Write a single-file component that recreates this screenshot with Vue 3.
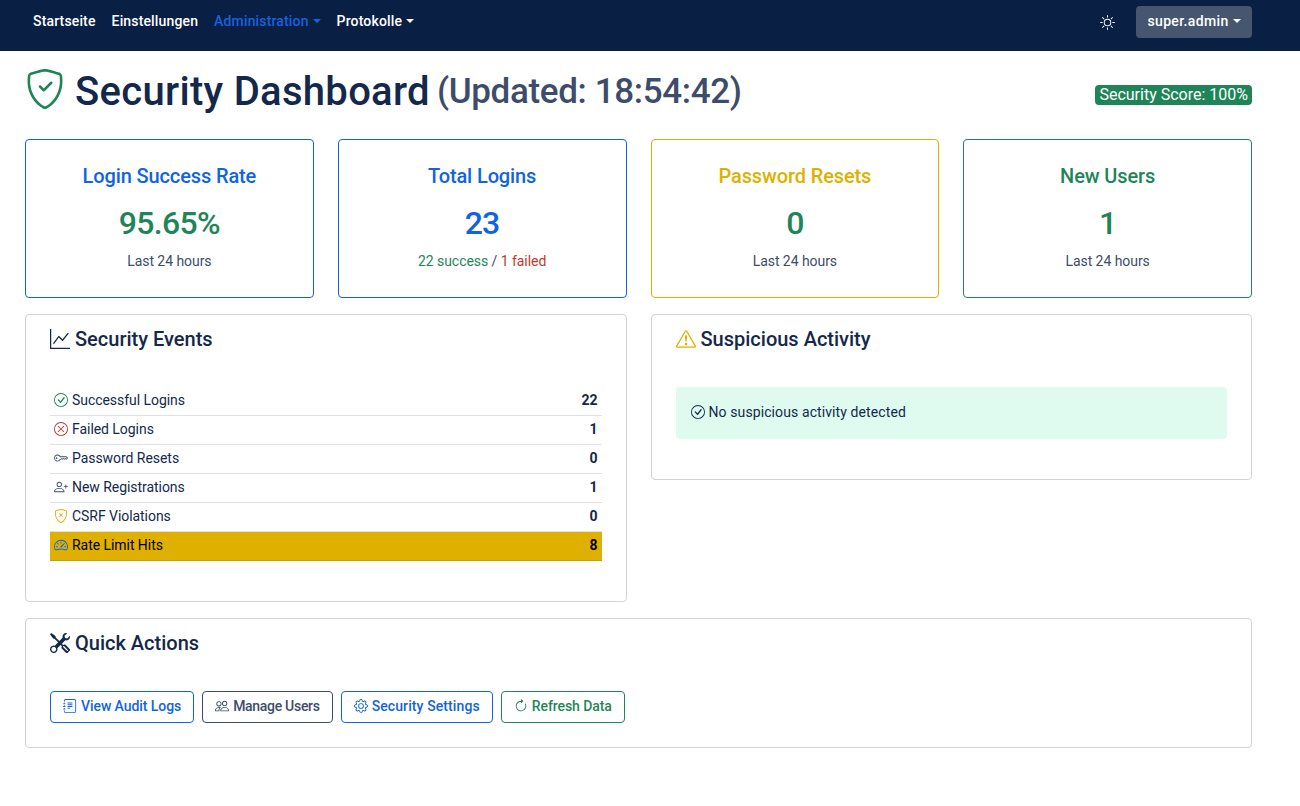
<script setup>
const shield = 'M5.338 1.59a61 61 0 0 0-2.837.856.48.48 0 0 0-.328.39c-.554 4.157.726 7.19 2.253 9.188a10.7 10.7 0 0 0 2.287 2.233c.346.244.652.42.893.533q.18.085.293.118a1 1 0 0 0 .101.025 1 1 0 0 0 .1-.025q.114-.034.294-.118c.24-.113.547-.29.893-.533a10.7 10.7 0 0 0 2.287-2.233c1.527-1.997 2.807-5.031 2.253-9.188a.48.48 0 0 0-.328-.39c-.651-.213-1.75-.56-2.837-.855C9.552 1.29 8.531 1.067 8 1.067c-.53 0-1.552.223-2.662.524zM5.072.56C6.157.265 7.31 0 8 0s1.843.265 2.928.56c1.11.3 2.229.655 2.887.87a1.54 1.54 0 0 1 1.044 1.262c.596 4.477-.787 7.795-2.465 9.99a11.8 11.8 0 0 1-2.517 2.453 7 7 0 0 1-1.048.625c-.28.132-.581.24-.829.24s-.548-.108-.829-.24a7 7 0 0 1-1.048-.625 11.8 11.8 0 0 1-2.517-2.453C1.928 10.487.545 7.169 1.141 2.692A1.54 1.54 0 0 1 2.185 1.43 63 63 0 0 1 5.072.56'
const circle = 'M8 15A7 7 0 1 1 8 1a7 7 0 0 1 0 14m0 1A8 8 0 1 0 8 0a8 8 0 0 0 0 16'

const icons = {
  shieldCheck: shield + 'M10.854 5.146a.5.5 0 0 1 0 .708l-3 3a.5.5 0 0 1-.708 0l-1.5-1.5a.5.5 0 1 1 .708-.708L7.5 7.793l2.646-2.647a.5.5 0 0 1 .708 0',
  shieldX: shield + 'M6.146 5.146a.5.5 0 0 1 .708 0L8 6.293l1.146-1.147a.5.5 0 1 1 .708.708L8.707 7l1.147 1.146a.5.5 0 0 1-.708.708L8 7.707 6.854 8.854a.5.5 0 1 1-.708-.708L7.293 7 6.146 5.854a.5.5 0 0 1 0-.708',
  graph: 'M0 0h1v15h15v1H0zm14.817 3.113a.5.5 0 0 1 .07.704l-4.5 5.5a.5.5 0 0 1-.74.037L7.06 6.767l-3.656 5.027a.5.5 0 0 1-.808-.588l4-5.5a.5.5 0 0 1 .758-.06l2.609 2.61 4.15-5.073a.5.5 0 0 1 .704-.07',
  check: circle + 'M10.97 4.97l-.02.022-3.473 4.425-2.093-2.094a.75.75 0 0 0-1.06 1.06L6.97 11.03a.75.75 0 0 0 1.079-.02l3.992-4.99a.75.75 0 0 0-1.071-1.05',
  cross: circle + 'M4.646 4.646a.5.5 0 0 1 .708 0L8 7.293l2.646-2.647a.5.5 0 0 1 .708.708L8.707 8l2.647 2.646a.5.5 0 0 1-.708.708L8 8.707l-2.646 2.647a.5.5 0 0 1-.708-.708L7.293 8 4.646 5.354a.5.5 0 0 1 0-.708',
  key: 'M0 8a4 4 0 0 1 7.465-2H14a.5.5 0 0 1 .354.146l1.5 1.5a.5.5 0 0 1 0 .708l-1.5 1.5a.5.5 0 0 1-.708 0L13 9.207l-.646.647a.5.5 0 0 1-.708 0L11 9.207l-.646.647a.5.5 0 0 1-.708 0L9 9.207l-.646.647A.5.5 0 0 1 8 10h-.535A4 4 0 0 1 0 8m4-3a3 3 0 1 0 2.712 4.285A.5.5 0 0 1 7.163 9h.63l.853-.854a.5.5 0 0 1 .708 0l.646.647.646-.647a.5.5 0 0 1 .708 0l.646.647.646-.647a.5.5 0 0 1 .708 0l.646.647.793-.793-1-1h-6.63a.5.5 0 0 1-.451-.285A3 3 0 0 0 4 5M4 8a1 1 0 1 1-2 0 1 1 0 0 1 2 0',
  personPlus: 'M6 8a3 3 0 1 0 0-6 3 3 0 0 0 0 6m2-3a2 2 0 1 1-4 0 2 2 0 0 1 4 0m4 8c0 1-1 1-1 1H1s-1 0-1-1 1-4 6-4 6 3 6 4m-1-.004c-.001-.246-.154-.986-.832-1.664C9.516 10.68 8.289 10 6 10s-3.516.68-4.168 1.332c-.678.678-.83 1.418-.832 1.664zM13.5 5a.5.5 0 0 1 .5.5V7h1.5a.5.5 0 0 1 0 1H14v1.5a.5.5 0 0 1-1 0V8h-1.5a.5.5 0 0 1 0-1H13V5.5a.5.5 0 0 1 .5-.5',
  speed: 'M8 4a.5.5 0 0 1 .5.5V6a.5.5 0 0 1-1 0V4.5A.5.5 0 0 1 8 4M3.732 5.732a.5.5 0 0 1 .707 0l.915.914a.5.5 0 1 1-.708.708l-.914-.915a.5.5 0 0 1 0-.707M2 10a.5.5 0 0 1 .5-.5h1.586a.5.5 0 0 1 0 1H2.5A.5.5 0 0 1 2 10m9.5 0a.5.5 0 0 1 .5-.5h1.5a.5.5 0 0 1 0 1H12a.5.5 0 0 1-.5-.5m.754-4.246a.39.39 0 0 0-.527-.02L7.547 9.31a.91.91 0 1 0 1.302 1.258l3.434-4.297a.39.39 0 0 0-.029-.518zM0 10a8 8 0 1 1 15.547 2.661c-.442 1.253-1.845 1.602-2.932 1.25C11.309 13.488 9.475 13 8 13c-1.474 0-3.31.488-4.615.911-1.087.352-2.49.003-2.932-1.25A8 8 0 0 1 0 10m8-7a7 7 0 0 0-6.603 9.329c.203.575.923.876 1.68.63C4.397 12.533 6.358 12 8 12s3.604.532 4.923.96c.757.245 1.477-.056 1.68-.631A7 7 0 0 0 8 3',
  warn: 'M7.938 2.016A.13.13 0 0 1 8.002 2a.13.13 0 0 1 .063.016.15.15 0 0 1 .054.057l6.857 11.667c.036.06.035.124.002.183a.2.2 0 0 1-.054.06.1.1 0 0 1-.066.017H1.146a.1.1 0 0 1-.066-.017.2.2 0 0 1-.054-.06.18.18 0 0 1 .002-.183L7.884 2.073a.15.15 0 0 1 .054-.057m1.044-.45a1.13 1.13 0 0 0-1.96 0L.165 13.233c-.457.778.091 1.767.98 1.767h13.713c.889 0 1.438-.99.98-1.767zM7.002 12a1 1 0 1 1 2 0 1 1 0 0 1-2 0M7.1 5.995a.905.905 0 1 1 1.8 0l-.35 3.507a.552.552 0 0 1-1.1 0z',
  tools: 'M1 0 0 1l2.2 3.081a1 1 0 0 0 .815.419h.07a1 1 0 0 1 .708.293l2.675 2.675-2.617 2.654A3.003 3.003 0 0 0 0 13a3 3 0 1 0 5.878-.851l2.654-2.617.968.968-.305.914a1 1 0 0 0 .242 1.023l3.27 3.27a.997.997 0 0 0 1.414 0l1.586-1.586a.997.997 0 0 0 0-1.414l-3.27-3.27a1 1 0 0 0-1.023-.242L10.5 9.5l-.96-.96 2.68-2.643A3.005 3.005 0 0 0 16 3q0-.405-.102-.777l-2.14 2.141L12 4l-.364-1.757L13.777.102a3 3 0 0 0-3.675 3.68L7.462 6.46 4.793 3.793a1 1 0 0 1-.293-.707v-.071a1 1 0 0 0-.419-.814zm9.646 10.646a.5.5 0 0 1 .708 0l2.914 2.915a.5.5 0 0 1-.707.707l-2.915-2.914a.5.5 0 0 1 0-.708M3 11l.471.242.529.026.287.445.445.287.026.529L5 13l-.242.471-.026.529-.445.287-.287.445-.529.026L3 15l-.471-.242L2 14.732l-.287-.445L1.268 14l-.026-.529L1 13l.242-.471.026-.529.445-.287.287-.445.529-.026z',
  journal: 'M5 10.5a.5.5 0 0 1 .5-.5h2a.5.5 0 0 1 0 1h-2a.5.5 0 0 1-.5-.5m0-2a.5.5 0 0 1 .5-.5h5a.5.5 0 0 1 0 1h-5a.5.5 0 0 1-.5-.5m0-2a.5.5 0 0 1 .5-.5h5a.5.5 0 0 1 0 1h-5a.5.5 0 0 1-.5-.5m0-2a.5.5 0 0 1 .5-.5h5a.5.5 0 0 1 0 1h-5a.5.5 0 0 1-.5-.5M3 0h10a2 2 0 0 1 2 2v12a2 2 0 0 1-2 2H3a2 2 0 0 1-2-2v-1h1v1a1 1 0 0 0 1 1h10a1 1 0 0 0 1-1V2a1 1 0 0 0-1-1H3a1 1 0 0 0-1 1v1H1V2a2 2 0 0 1 2-2M1 5v-.5a.5.5 0 0 1 1 0V5h.5a.5.5 0 0 1 0 1h-2a.5.5 0 0 1 0-1zm0 3v-.5a.5.5 0 0 1 1 0V8h.5a.5.5 0 0 1 0 1h-2a.5.5 0 0 1 0-1zm0 3v-.5a.5.5 0 0 1 1 0v.5h.5a.5.5 0 0 1 0 1h-2a.5.5 0 0 1 0-1z',
  people: 'M15 14s1 0 1-1-1-4-5-4-5 3-5 4 1 1 1 1zm-7.978-1L7 12.996c.001-.264.167-1.03.76-1.72C8.312 10.629 9.282 10 11 10c1.717 0 2.687.63 3.24 1.276.593.69.758 1.457.76 1.72l-.008.002-.014.002zM11 7a2 2 0 1 0 0-4 2 2 0 0 0 0 4m3-2a3 3 0 1 1-6 0 3 3 0 0 1 6 0M6.936 9.28a6 6 0 0 0-1.23-.247A7 7 0 0 0 5 9c-4 0-5 3-5 4q0 1 1 1h4.216A2.24 2.24 0 0 1 5 13c0-1.01.377-2.042 1.09-2.904.243-.294.526-.569.846-.816M4.92 10A5.5 5.5 0 0 0 4 13H1c0-.26.164-1.03.76-1.724.545-.636 1.492-1.256 3.16-1.275ZM1.5 5.5a3 3 0 1 1 6 0 3 3 0 0 1-6 0m3-2a2 2 0 1 0 0 4 2 2 0 0 0 0-4',
  gear: 'M8 4.754a3.246 3.246 0 1 0 0 6.492 3.246 3.246 0 0 0 0-6.492M5.754 8a2.246 2.246 0 1 1 4.492 0 2.246 2.246 0 0 1-4.492 0M9.796 1.343c-.527-1.79-3.065-1.79-3.592 0l-.094.319a.873.873 0 0 1-1.255.52l-.292-.16c-1.64-.892-3.433.902-2.54 2.541l.159.292a.873.873 0 0 1-.52 1.255l-.319.094c-1.79.527-1.79 3.065 0 3.592l.319.094a.873.873 0 0 1 .52 1.255l-.16.292c-.892 1.64.901 3.434 2.541 2.54l.292-.159a.873.873 0 0 1 1.255.52l.094.319c.527 1.79 3.065 1.79 3.592 0l.094-.319a.873.873 0 0 1 1.255-.52l.292.16c1.64.893 3.434-.902 2.54-2.541l-.159-.292a.873.873 0 0 1 .52-1.255l.319-.094c1.79-.527 1.79-3.065 0-3.592l-.319-.094a.873.873 0 0 1-.52-1.255l.16-.292c.893-1.64-.902-3.433-2.541-2.54l-.292.159a.873.873 0 0 1-1.255-.52zm-2.633.283c.246-.835 1.428-.835 1.674 0l.094.319a1.873 1.873 0 0 0 2.693 1.115l.291-.16c.764-.415 1.6.42 1.184 1.185l-.159.292a1.873 1.873 0 0 0 1.116 2.692l.318.094c.835.246.835 1.428 0 1.674l-.319.094a1.873 1.873 0 0 0-1.115 2.693l.16.291c.415.764-.42 1.6-1.185 1.184l-.291-.159a1.873 1.873 0 0 0-2.693 1.116l-.094.318c-.246.835-1.428.835-1.674 0l-.094-.319a1.873 1.873 0 0 0-2.692-1.115l-.292.16c-.764.415-1.6-.42-1.184-1.185l.159-.291A1.873 1.873 0 0 0 1.945 8.93l-.319-.094c-.835-.246-.835-1.428 0-1.674l.319-.094A1.873 1.873 0 0 0 3.06 4.377l-.16-.292c-.415-.764.42-1.6 1.185-1.184l.292.159a1.873 1.873 0 0 0 2.692-1.115z',
  refresh: 'M8 3a5 5 0 1 0 4.546 2.914.5.5 0 0 1 .908-.417A6 6 0 1 1 8 2zM8 4.466V.534a.25.25 0 0 1 .41-.192l2.36 1.966c.12.1.12.284 0 .384L8.41 4.658A.25.25 0 0 1 8 4.466',
  sun: 'M8 11a3 3 0 1 1 0-6 3 3 0 0 1 0 6m0 1a4 4 0 1 0 0-8 4 4 0 0 0 0 8M8 0a.5.5 0 0 1 .5.5v2a.5.5 0 0 1-1 0v-2A.5.5 0 0 1 8 0m0 13a.5.5 0 0 1 .5.5v2a.5.5 0 0 1-1 0v-2A.5.5 0 0 1 8 13m8-5a.5.5 0 0 1-.5.5h-2a.5.5 0 0 1 0-1h2a.5.5 0 0 1 .5.5M3 8a.5.5 0 0 1-.5.5h-2a.5.5 0 0 1 0-1h2A.5.5 0 0 1 3 8m10.657-5.657a.5.5 0 0 1 0 .707l-1.414 1.415a.5.5 0 1 1-.707-.708l1.414-1.414a.5.5 0 0 1 .707 0m-9.193 9.193a.5.5 0 0 1 0 .707L3.05 13.657a.5.5 0 0 1-.707-.707l1.414-1.414a.5.5 0 0 1 .707 0m9.193 2.121a.5.5 0 0 1-.707 0l-1.414-1.414a.5.5 0 0 1 .707-.707l1.414 1.414a.5.5 0 0 1 0 .707M4.464 4.465a.5.5 0 0 1-.707 0L2.343 3.05a.5.5 0 1 1 .707-.707l1.414 1.414a.5.5 0 0 1 0 .708'
}

const stats = [
  { title: 'Login Success Rate', value: '95.65%', tone: 'primary', valueTone: 'success', border: 'primary' },
  { title: 'Total Logins', value: '23', tone: 'primary', valueTone: 'primary', border: 'primary', split: true },
  { title: 'Password Resets', value: '0', tone: 'warning', valueTone: 'success', border: 'warning' },
  { title: 'New Users', value: '1', tone: 'success', valueTone: 'success', border: 'success' }
]

const events = [
  { label: 'Successful Logins', count: 22, icon: 'check', tone: 'success' },
  { label: 'Failed Logins', count: 1, icon: 'cross', tone: 'danger' },
  { label: 'Password Resets', count: 0, icon: 'key', tone: 'slate' },
  { label: 'New Registrations', count: 1, icon: 'personPlus', tone: 'slate' },
  { label: 'CSRF Violations', count: 0, icon: 'shieldX', tone: 'warning' },
  { label: 'Rate Limit Hits', count: 8, icon: 'speed', tone: 'primary', hot: true }
]

const actions = [
  { label: 'View Audit Logs', icon: 'journal', tone: 'primary' },
  { label: 'Manage Users', icon: 'people', tone: 'slate', spacing: 'tight' },
  { label: 'Security Settings', icon: 'gear', tone: 'primary', spacing: 'wide' },
  { label: 'Refresh Data', icon: 'refresh', tone: 'success' }
]
</script>

<template>
  <nav class="navbar">
    <ul class="nav-links">
      <li><a>Startseite</a></li>
      <li><a>Einstellungen</a></li>
      <li><a class="active caret">Administration</a></li>
      <li><a class="caret">Protokolle</a></li>
    </ul>
    <div class="nav-right">
      <svg class="sun" viewBox="0 0 16 16" fill="currentColor"><path :d="icons.sun" /></svg>
      <button class="user-btn caret">super.admin</button>
    </div>
  </nav>

  <main class="page">
    <header class="head">
      <h1>
        <svg class="head-icon success" viewBox="0 0 16 16" fill="currentColor"><path :d="icons.shieldCheck" /></svg>
        <span>Security Dashboard</span>
        <small>(Updated: 18:54:42)</small>
      </h1>
      <span class="score">Security Score: 100%</span>
    </header>

    <section class="stats">
      <div v-for="s in stats" :key="s.title" class="stat" :class="'b-' + s.border">
        <h5 :class="s.tone">{{ s.title }}</h5>
        <div class="stat-value" :class="s.valueTone">{{ s.value }}</div>
        <p v-if="s.split" class="stat-note"><span class="success">22 success</span> / <span class="danger">1 failed</span></p>
        <p v-else class="stat-note">Last 24 hours</p>
      </div>
    </section>

    <section class="panels">
      <div class="card">
        <h5 class="card-title"><svg class="title-icon" viewBox="0 0 16 16" fill="currentColor"><path :d="icons.graph" /></svg>Security Events</h5>
        <div class="event-list">
          <div v-for="e in events" :key="e.label" class="event" :class="{ hot: e.hot }">
            <span class="event-label">
              <svg class="row-icon" :class="e.tone" viewBox="0 0 16 16" fill="currentColor"><path :d="icons[e.icon]" /></svg>
              {{ e.label }}
            </span>
            <strong>{{ e.count }}</strong>
          </div>
        </div>
      </div>
      <div class="card activity">
        <h5 class="card-title"><svg class="title-icon warning" viewBox="0 0 16 16" fill="currentColor"><path :d="icons.warn" /></svg>Suspicious Activity</h5>
        <div class="alert">
          <svg class="row-icon" viewBox="0 0 16 16" fill="currentColor"><path :d="icons.check" /></svg>
          No suspicious activity detected
        </div>
      </div>
    </section>

    <section class="card quick">
      <h5 class="card-title"><svg class="title-icon" viewBox="0 0 16 16" fill="currentColor"><path :d="icons.tools" /></svg>Quick Actions</h5>
      <div class="actions">
        <button v-for="a in actions" :key="a.label" class="btn" :class="[a.tone, a.spacing]">
          <svg class="btn-icon" viewBox="0 0 16 16" fill="currentColor"><path :d="icons[a.icon]" /></svg>
          {{ a.label }}
        </button>
      </div>
    </section>
  </main>
</template>

<style>
body {
  margin: 0;
  background: #fff;
}
</style>

<style scoped>
.navbar {
  height: 51px;
  box-sizing: border-box;
  background: #0a1f44;
  padding: 6px 48px 0 25px;
  display: flex;
  justify-content: space-between;
  align-items: flex-start;
  font-family: Roboto, "Liberation Sans", sans-serif;
}
.nav-links {
  list-style: none;
  margin: 0;
  padding: 0;
  display: flex;
}
.nav-links a {
  display: block;
  padding: 5px 8px;
  line-height: 21px;
  font-size: 14px;
  font-weight: 500;
  letter-spacing: .15px;
  color: #fff;
}
.nav-links a.active {
  color: #1164e0;
}
.caret::after {
  content: "";
  display: inline-block;
  margin-left: 4px;
  vertical-align: 3px;
  border-top: 4px solid;
  border-left: 4px solid transparent;
  border-right: 4px solid transparent;
}
.nav-right {
  display: flex;
  align-items: center;
}
.sun {
  width: 15px;
  height: 15px;
  color: #fff;
  margin-right: 21px;
}
.user-btn {
  width: 116px;
  height: 32px;
  border: 0;
  border-radius: 4px;
  background: #47566f;
  color: #fff;
  font: 500 14px Roboto, sans-serif;
  letter-spacing: .35px;
  padding: 0 0 2px;
}

.page {
  padding: 0 48px 0 25px;
  color: #14284b;
  font-family: Roboto, "Liberation Sans", sans-serif;
}
.head {
  display: flex;
  justify-content: space-between;
  align-items: center;
  height: 88px;
  box-sizing: border-box;
  padding-bottom: 6px;
}
h1 {
  margin: 0;
  display: flex;
  align-items: center;
  font-size: 40px;
  font-weight: 500;
  line-height: 48px;
  letter-spacing: .3px;
}
.head-icon {
  width: 40px;
  height: 40px;
  margin-right: 10px;
  margin-bottom: 6px;
}
h1 small {
  font-size: 35px;
  color: #3e4c6b;
  margin-left: 7px;
  letter-spacing: -.35px;
}
.score {
  margin-top: 6px;
  background: #1f8559;
  color: #fff;
  font-size: 16px;
  line-height: 20px;
  border-radius: 4px;
  padding: 0 4px;
}

.stats {
  display: grid;
  grid-template-columns: repeat(4, 1fr);
  gap: 24px;
}
.stat {
  box-sizing: border-box;
  height: 159px;
  border: 1px solid;
  border-radius: 4px;
  padding: 24px 16px 0;
  text-align: center;
}
.b-primary { border-color: #1164e0; }
.b-warning { border-color: #e0b000; }
.b-success { border-color: #1f8559; }
.stat h5 {
  margin: 0;
  font-size: 20px;
  font-weight: 500;
  line-height: 24px;
  letter-spacing: -.12px;
}
.stat-value {
  margin-top: 16px;
  font-size: 32px;
  font-weight: 500;
  line-height: 38px;
  letter-spacing: -.7px;
}
.stat-note {
  margin: 9px 0 0;
  font-size: 14px;
  line-height: 21px;
  letter-spacing: -.05px;
  color: #3e4c6b;
}
.primary { color: #1164e0; }
.success { color: #1f8559; }
.warning { color: #e0b000; }
.danger { color: #c0392b; }
.slate { color: #3e4c6b; }

.panels {
  display: grid;
  grid-template-columns: 1fr 1fr;
  gap: 24px;
  align-items: start;
  margin-top: 16px;
}
.card {
  box-sizing: border-box;
  border: 1px solid #d0d3d8;
  border-radius: 4px;
  padding: 12px 24px 0;
}
.card-title {
  margin: 0;
  display: flex;
  align-items: center;
  font-size: 20px;
  font-weight: 500;
  line-height: 24px;
}
.title-icon {
  width: 20px;
  height: 20px;
  margin-right: 5px;
}
.panels > .card:first-child {
  height: 288px;
}
.event-list {
  margin-top: 36px;
}
.event {
  display: flex;
  justify-content: space-between;
  align-items: center;
  height: 29px;
  box-sizing: border-box;
  padding: 0 4px 3px;
  font-size: 14px;
  letter-spacing: -.05px;
  color: #14284b;
  border-bottom: 1px solid #dee2e6;
}
.event.hot {
  background: #e0b000;
  color: #000;
  border-bottom-color: #c9a000;
}
.event-label {
  display: flex;
  align-items: center;
}
.row-icon {
  width: 14px;
  height: 14px;
  margin-right: 4px;
  flex: none;
}
.event strong {
  font-weight: 700;
}
.activity {
  height: 166px;
}
.alert {
  margin-top: 36px;
  height: 52px;
  box-sizing: border-box;
  display: flex;
  align-items: center;
  padding: 0 15px 2px;
  background: #dffbf0;
  border-radius: 4px;
  font-size: 14px;
  letter-spacing: .1px;
}
.quick {
  margin-top: 16px;
  height: 130px;
}
.actions {
  display: flex;
  gap: 8px;
  margin-top: 36px;
}
.btn {
  display: flex;
  align-items: center;
  height: 32px;
  padding: 0 12px 2px;
  background: #fff;
  border: 1px solid;
  border-radius: 4px;
  font: 500 14px Roboto, sans-serif;
  letter-spacing: -.07px;
}
.btn.tight {
  letter-spacing: -.3px;
}
.btn.wide {
  letter-spacing: .1px;
}
.btn-icon {
  width: 14px;
  height: 14px;
  margin-right: 4px;
}
</style>
